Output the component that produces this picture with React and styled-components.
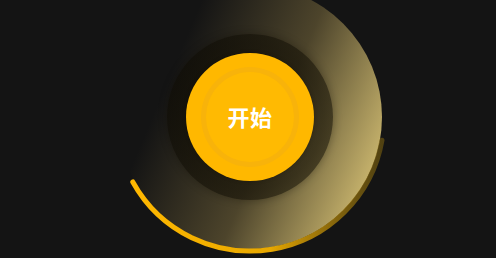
import styled, { createGlobalStyle } from 'styled-components';

const GlobalStyle = createGlobalStyle`
    html, body {
        margin: 0;
        padding: 0;
        background-color: #141414;
    }
`;

const Stage = styled.div`
    width: 496px;
    height: 258px;
    overflow: hidden;
    display: flex;
    justify-content: center;
    align-items: flex-start;
    background-color: #141414;
`;

const Wheel = styled.div`
    width: 276px;
    height: 276px;
    margin-top: -21px;
    margin-left: 4px;
    flex-shrink: 0;
    display: grid;
    place-items: center;
    & > * {
        grid-area: 1 / 1;
    }
`;

const Sweep = styled.div`
    width: 264px;
    height: 264px;
    border-radius: 50%;
    background: linear-gradient(113deg, rgba(20, 20, 20, 0) 24%, rgba(118, 103, 60, 0.58) 57%, #d2bd72 92%);
`;

const Arc = styled.svg`
    width: 276px;
    height: 276px;
    overflow: visible;
`;

const Shade = styled.div`
    width: 166px;
    height: 166px;
    border-radius: 50%;
    background: radial-gradient(circle, rgba(14, 11, 2, 0.6) 62%, rgba(14, 11, 2, 0.45) 100%);
    box-shadow: 0 0 8px rgba(14, 11, 2, 0.35);
`;

const Button = styled.button`
    width: 128px;
    height: 128px;
    border-radius: 50%;
    border: none;
    padding: 0;
    background-color: #ffb800;
    display: flex;
    align-items: center;
    justify-content: center;
    cursor: pointer;
    box-shadow: 0 0 4px rgba(0, 0, 0, 0.2);
`;

const Inner = styled.div`
    width: 88px;
    height: 88px;
    border-radius: 50%;
    border: 5px solid #f8b30a;
    background-color: #ffba02;
    display: flex;
    align-items: center;
    justify-content: center;
    color: #fff;
    font-family: "Noto Sans CJK SC", "Noto Sans", sans-serif;
    font-size: 22px;
    font-weight: 700;
    letter-spacing: 0.5px;
    padding-bottom: 2px;
    box-sizing: content-box;
`;

function GoldArc() {
    // centre 138,138 radius 134, from ~10deg (right) to ~151deg (lower left)
    const r = 134;
    const c = 138;
    const p = (deg) => {
        const a = (deg * Math.PI) / 180;
        return [c + r * Math.cos(a), c + r * Math.sin(a)];
    };
    const [x1, y1] = p(151);
    const [x2, y2] = p(10);
    return (
        <Arc viewBox="0 0 276 276">
            <defs>
                <linearGradient id="arcGold" x1="0" y1="0" x2="1" y2="0">
                    <stop offset="0" stopColor="#ffb800" />
                    <stop offset="0.55" stopColor="#e8a800" />
                    <stop offset="1" stopColor="#7a6010" stopOpacity="0.6" />
                </linearGradient>
            </defs>
            <path
                d={`M ${x1} ${y1} A ${r} ${r} 0 0 0 ${x2} ${y2}`}
                fill="none"
                stroke="url(#arcGold)"
                strokeWidth="5"
                strokeLinecap="round"
            />
        </Arc>
    );
}

export default function App() {
    return (
        <Stage>
            <GlobalStyle />
            <Wheel>
                <Sweep />
                <GoldArc />
                <Shade />
                <Button>
                    <Inner>开始</Inner>
                </Button>
            </Wheel>
        </Stage>
    );
}
